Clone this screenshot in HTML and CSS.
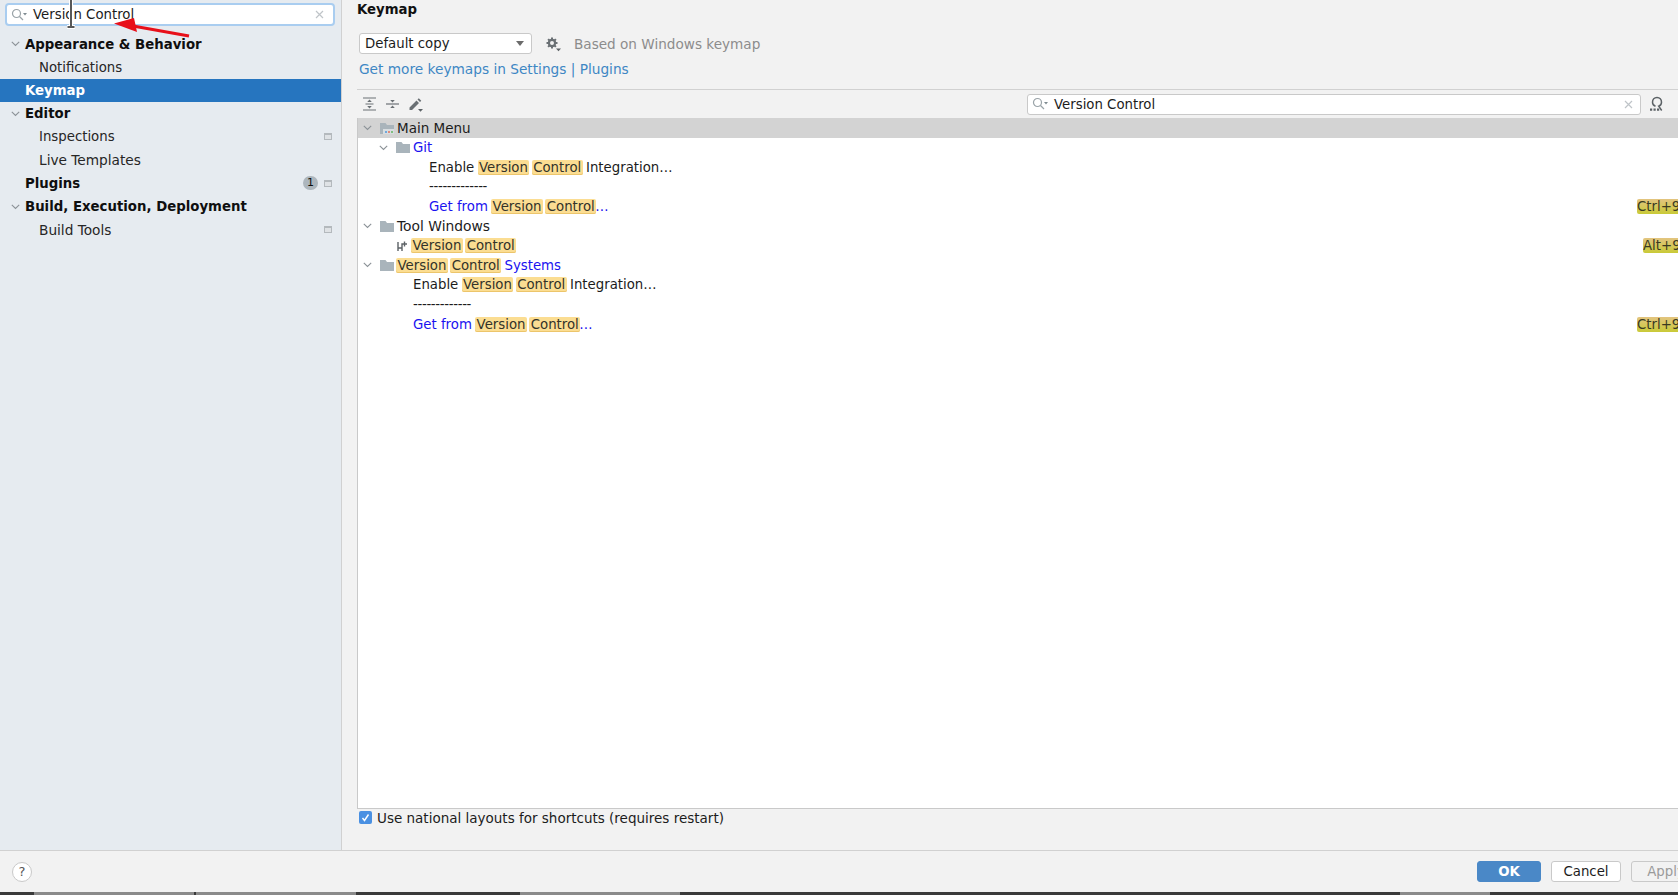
FILE: index.html
```html
<!DOCTYPE html>
<html lang="en">
<head>
<meta charset="utf-8">
<title>Settings - Keymap</title>
<link rel="stylesheet" href="styles.css">
</head>
<body>
<div class="window">
  <div class="main">
    <aside class="sidebar">
      <div class="side-search">
        <svg class="mag" width="16" height="14" viewBox="0 0 16 14"><circle cx="5.5" cy="5.5" r="4" fill="none" stroke="#9aa3a8" stroke-width="1.2"/><path d="M8.5 8.5l3.5 3.5" stroke="#9aa3a8" stroke-width="1.3"/><path d="M12 5h4l-2 2.4z" fill="#7f8b91"/></svg>
        <span class="search-text">Version Control</span>
        <svg class="clear" width="9" height="9" viewBox="0 0 9 9"><path d="M1 1l7 7M8 1l-7 7" stroke="#bfc4c8" stroke-width="1.2"/></svg>
      </div>
      <nav class="side-list">
        <div class="side-row bold"><svg class="chev" width="9" height="6" viewBox="0 0 9 6"><path d="M.8.8l3.7 3.7L8.2.8" fill="none" stroke="#8b9297" stroke-width="1.1"/></svg><span>Appearance &amp; Behavior</span></div>
        <div class="side-row sub"><span>Notifications</span></div>
        <div class="side-row bold top selected"><span>Keymap</span></div>
        <div class="side-row bold"><svg class="chev" width="9" height="6" viewBox="0 0 9 6"><path d="M.8.8l3.7 3.7L8.2.8" fill="none" stroke="#8b9297" stroke-width="1.1"/></svg><span>Editor</span></div>
        <div class="side-row sub"><span>Inspections</span><i class="proj"></i></div>
        <div class="side-row sub wide"><span>Live Templates</span></div>
        <div class="side-row bold top"><span>Plugins</span><b class="badge">1</b><i class="proj"></i></div>
        <div class="side-row bold"><svg class="chev" width="9" height="6" viewBox="0 0 9 6"><path d="M.8.8l3.7 3.7L8.2.8" fill="none" stroke="#8b9297" stroke-width="1.1"/></svg><span>Build, Execution, Deployment</span></div>
        <div class="side-row sub wide"><span>Build Tools</span><i class="proj"></i></div>
      </nav>
    </aside>
    <section class="content">
      <h1 class="title">Keymap</h1>
      <div class="scheme-row">
        <div class="combo"><span>Default copy</span><i class="combo-arrow"></i></div>
        <svg class="gear" width="17" height="16" viewBox="0 0 17 16"><circle cx="7" cy="7" r="3.1" fill="none" stroke="#6a7074" stroke-width="2.2"/><path d="M7 1.500v2M7 10.500v2M1.500 7h2M10.500 7h2M3.100 3.100l1.400 1.400M9.500 9.500l1.400 1.400M10.900 3.100L9.500 4.500M4.500 9.500l-1.400 1.400" stroke="#6a7074" stroke-width="2"/><path d="M11 12.500h5l-2.500 2.700z" fill="#5c6266"/></svg>
        <span class="based">Based on Windows keymap</span>
      </div>
      <div class="more"><a>Get more keymaps in Settings | Plugins</a></div>
      <hr class="sep">
      <div class="toolbar">
        <div class="tools">
          <svg width="15" height="14" viewBox="0 0 15 14"><path d="M1 1h13M1 13h13M3.500 7h8" stroke="#6a7074" stroke-width="1.200"/><path d="M7.500 2.500l2.300 2.600H5.200zM7.500 11.500l2.300-2.600H5.200z" fill="#6a7074"/></svg>
          <svg width="15" height="14" viewBox="0 0 15 14"><path d="M1 7h13" stroke="#6a7074" stroke-width="1.200"/><path d="M7.500 5.500L9.800 2.900H5.200zM7.500 8.500l2.300 2.600H5.200z" fill="#6a7074"/></svg>
          <svg width="15" height="15" viewBox="0 0 15 15"><path d="M1.500 10.500L8.500 3.500l2.500 2.500-7 7H1.500zM9.500 2.500l1.300-1.300 2.500 2.500L12 5z" fill="#6a7074"/><path d="M10 12h5l-2.500 2.700z" fill="#5c6266"/></svg>
        </div>
        <div class="tree-search">
          <svg class="mag" width="16" height="14" viewBox="0 0 16 14"><circle cx="5.500" cy="5.500" r="4" fill="none" stroke="#9aa3a8" stroke-width="1.200"/><path d="M8.500 8.500l3.500 3.500" stroke="#9aa3a8" stroke-width="1.300"/><path d="M12 5h4l-2 2.400z" fill="#7f8b91"/></svg>
          <span class="search-text">Version Control</span>
          <svg class="clear" width="9" height="9" viewBox="0 0 9 9"><path d="M1 1l7 7M8 1l-7 7" stroke="#bfc4c8" stroke-width="1.200"/></svg>
        </div>
        <svg class="shortcut-find" width="16" height="16" viewBox="0 0 16 16"><path d="M6.500 10.200C4.400 9.500 3.500 7.900 3.500 6.200 3.500 3.600 5.300 1.500 8 1.500s4.500 2.100 4.500 4.700c0 1.700-.9 3.300-2.800 4l3 4.300" fill="none" stroke="#5c6266" stroke-width="1.500"/><path d="M1 12.500h2.200v2.200H1zM4.500 12.500h2.200v2.200H4.500zM8 12.500h2.200v2.200H8z" fill="#5c6266"/></svg>
      </div>
      <div class="tree">
        <div class="row selected-row lv0"><svg class="chev" width="9" height="6" viewBox="0 0 9 6"><path d="M.8.8l3.700 3.700L8.200.8" fill="none" stroke="#8b9297" stroke-width="1.100"/></svg><svg class="folder" width="14" height="13" viewBox="0 0 14 13"><path d="M0 1h5.500l1.500 2H14v9H0z" fill="#a9b4bb"/><path d="M3 7h11v5H3z" fill="#d8dde0"/><path d="M5 9h2v2H5z" fill="#6fa8dc"/><path d="M8 9h2v2H8z" fill="#e08a7a"/><path d="M11 9h2v2h-2z" fill="#7fbf7f"/></svg><span class="name">Main Menu</span></div>
        <div class="row lv1"><svg class="chev" width="9" height="6" viewBox="0 0 9 6"><path d="M.8.8l3.700 3.700L8.200.8" fill="none" stroke="#8b9297" stroke-width="1.100"/></svg><svg class="folder" width="14" height="11" viewBox="0 0 14 11"><path d="M0 0h5.500L7 2h7v9H0z" fill="#a9b4bb"/></svg><span class="mod">Git</span></div>
        <div class="row lv2"><span>Enable <mark>Version</mark> <mark>Control</mark> Integration…</span></div>
        <div class="row lv2"><span class="rule">-------------</span></div>
        <div class="row lv2"><span class="mod">Get from <mark>Version</mark> <mark>Control</mark>…</span><span class="keys">Ctrl+9</span></div>
        <div class="row lv0"><svg class="chev" width="9" height="6" viewBox="0 0 9 6"><path d="M.8.8l3.700 3.700L8.200.8" fill="none" stroke="#8b9297" stroke-width="1.100"/></svg><svg class="folder" width="14" height="11" viewBox="0 0 14 11"><path d="M0 0h5.500L7 2h7v9H0z" fill="#a9b4bb"/></svg><span class="name wider">Tool Windows</span></div>
        <div class="row lv-action"><svg class="vcs" width="10" height="10" viewBox="0 0 10 10"><path d="M1 1v9M5 10V3h5M7.500 .500v5M1 7h4" fill="none" stroke="#5c6266" stroke-width="1.400"/></svg><span><mark>Version</mark> <mark>Control</mark></span><span class="keys alt">Alt+9</span></div>
        <div class="row lv0"><svg class="chev" width="9" height="6" viewBox="0 0 9 6"><path d="M.8.8l3.700 3.700L8.200.8" fill="none" stroke="#8b9297" stroke-width="1.100"/></svg><svg class="folder" width="14" height="11" viewBox="0 0 14 11"><path d="M0 0h5.500L7 2h7v9H0z" fill="#a9b4bb"/></svg><span class="mod"><mark>Version</mark> <mark>Control</mark> Systems</span></div>
        <div class="row lv1b"><span>Enable <mark>Version</mark> <mark>Control</mark> Integration…</span></div>
        <div class="row lv1b"><span class="rule">-------------</span></div>
        <div class="row lv1b"><span class="mod">Get from <mark>Version</mark> <mark>Control</mark>…</span><span class="keys">Ctrl+9</span></div>
      </div>
      <label class="national"><i class="check"><svg width="9" height="9" viewBox="0 0 9 9"><path d="M1.500 5l2 2.500L7.500 1.500" fill="none" stroke="#fff" stroke-width="1.400"/></svg></i><span>Use national layouts for shortcuts (requires restart)</span></label>
    </section>
  </div>
  <footer class="footer">
    <div class="help">?</div>
    <div class="buttons">
      <button class="btn ok">OK</button>
      <button class="btn">Cancel</button>
      <button class="btn disabled">Apply</button>
    </div>
  </footer>
  <div class="taskbar">
    <i class="task"></i><i class="task"></i><i class="task off"></i><i class="task"></i><i class="spacer"></i><i class="task end"></i>
  </div>
</div>
<svg class="arrow" width="80" height="24" viewBox="0 0 80 24"><path d="M76 18L20 8" stroke="#e8101a" stroke-width="3.200"/><path d="M1 5.500L21 0l3 14z" fill="#e8101a"/></svg>
<svg class="ibeam" width="10" height="30" viewBox="0 0 10 30"><path d="M5 0v26M1 27h8" stroke="#fff" stroke-width="4"/><path d="M5 0v26M1.500 27h7" stroke="#222" stroke-width="1.500"/></svg>
</body>
</html>
```
FILE: styles.css
```css
* { box-sizing: border-box; }
html, body { margin: 0; height: 100%; overflow: hidden; }
body { font-family: "DejaVu Sans", sans-serif; font-size: 13.3px; color: #1c1c1c; background: #f2f2f2; }
.window { width: 1678px; height: 895px; display: flex; flex-direction: column; overflow: hidden; }
.main { flex: 1; display: flex; min-height: 0; }

.sidebar { width: 342px; background: #e6ebf0; border-right: 1px solid #d1d1d1; padding-top: 3px; flex: none; }
.side-search { margin: 0 6px 0 5px; height: 23px; background: #fff; border: 2px solid #a9cdf0; border-radius: 4px; display: flex; align-items: center; padding: 0 9px 0 4px; }
.side-search .search-text { margin-left: 6px; flex: 1; }
.clear { flex: none; }
.side-list { padding-top: 6.6px; display: flex; flex-direction: column; }
.side-row { height: 23.2px; display: flex; align-items: center; white-space: nowrap; }
.side-row .chev { margin-left: 11px; margin-right: 5px; }
.side-row.bold { font-weight: 700; color: #0f0f0f; }
.side-row.top { padding-left: 25px; }
.side-row.sub { padding-left: 39px; color: #262626; }
.side-row.wide { font-size: 13.7px; }
.side-row span:first-of-type { flex: 1; }
.side-row .chev + span { flex: 1; }
.selected { background: #2675bf; color: #fff !important; }
.proj { width: 8px; height: 7px; background: #dfe2e5; border: 1px solid #b4b9bd; border-top-width: 2px; margin-right: 9px; flex: none; }
.badge { font-weight: 400; font-size: 11px; width: 15px; height: 14px; line-height: 14px; text-align: center; border-radius: 7px; background: #adb6bd; margin-right: 6px; }

.content { flex: 1; min-width: 0; padding: 0 0 0 15px; display: flex; flex-direction: column; }
.title { margin: 0; font-size: 13.3px; font-weight: 700; line-height: 19px; height: 33px; color: #111; }
.scheme-row { display: flex; align-items: center; height: 21px; padding-left: 2px; }
.combo { width: 173px; height: 21px; background: #fff; border: 1px solid #c9c9c9; border-radius: 3px; display: flex; align-items: center; justify-content: space-between; padding: 0 7px 0 5px; }
.combo-arrow { width: 0; height: 0; border-left: 4px solid transparent; border-right: 4px solid transparent; border-top: 5px solid #6b6b6b; }
.gear { margin-left: 13px; }
.based { margin-left: 12px; color: #8c8c8c; font-size: 13.6px; }
.more { margin-top: 6px; padding-left: 2px; line-height: 19px; height: 29px; font-size: 13.7px; }
.more a { color: #3e87c4; }
.sep { margin: 0; border: 0; border-top: 1px solid #d1d1d1; height: 1px; }
.toolbar { height: 28px; display: flex; align-items: center; padding-right: 13px; }
.tools { display: flex; gap: 8px; padding-left: 5px; flex: 1; }
.tree-search { width: 614px; height: 21px; background: #fff; border: 1px solid #c9c9c9; border-radius: 3px; display: flex; align-items: center; padding: 0 7px 0 4px; }
.tree-search .search-text { margin-left: 6px; flex: 1; }
.shortcut-find { margin-left: 8px; }

.tree { flex: 1; min-height: 0; background: #fff; border-bottom: 1px solid #c9c9c9; border-left: 1px solid #c9c9c9; overflow: hidden; }
.row { height: 19.6px; display: flex; align-items: center; white-space: nowrap; }
.row .chev { margin-right: 8px; flex: none; }
.row .folder { margin-right: 3px; flex: none; }
.selected-row { background: #d3d3d3; height: 20px; }
.name { font-size: 13.5px; }
.name.wider { font-size: 13.85px; }
.rule { letter-spacing: -0.33px; }
.lv0 { padding-left: 5px; }
.lv1 { padding-left: 21px; }
.lv2 { padding-left: 71px; }
.lv1b { padding-left: 55px; }
.lv-action { padding-left: 39px; }
.vcs { margin-right: 5px; flex: none; }
.mod { color: #1a12f0; }
mark { background: #fbdd92; color: #33332a; border-radius: 2px; box-shadow: inset 0 -1px 0 #ecc56b; padding: 0 1.5px; margin: 0 -1px; }
.keys { margin-left: auto; width: 41px; overflow: hidden; flex: none; background: linear-gradient(#e3c480, #c9ca37); border-radius: 2px 0 0 2px; color: #3a3a22; }
.keys.alt { width: 35px; }

.national { height: 41px; display: flex; align-items: flex-start; padding: 1px 0 0 2px; font-size: 13.5px; }
.check { width: 13px; height: 13px; margin-top: 1px; background: #4a90e2; border-radius: 2px; display: flex; align-items: center; justify-content: center; margin-right: 5px; }

.footer { height: 42px; border-top: 1px solid #d1d1d1; flex: none; display: flex; align-items: center; justify-content: space-between; padding: 0 0 0 12px; }
.help { width: 20px; height: 20px; border-radius: 50%; background: #fff; border: 1px solid #c9c9c9; display: flex; align-items: center; justify-content: center; color: #555; font-size: 13px; }
.buttons { display: flex; gap: 10px; width: 201px; flex: none; overflow: hidden; }
.btn { font: 13.3px "DejaVu Sans", sans-serif; height: 21px; width: 70px; background: #fff; border: 1px solid #c9c9c9; border-radius: 3px; padding: 0; color: #1c1c1c; flex: none; }
.btn.ok { width: 64px; background: #4a88c7; border-color: #4a88c7; color: #fff; font-weight: 700; }
.btn.disabled { background: #f2f2f2; color: #9a9a9a; }

.taskbar { height: 3px; flex: none; background: #3a3a3a; display: flex; gap: 2px; padding-left: 34px; }
.task { width: 160px; background: #8a8a8a; flex: none; }
.task.off { background: transparent; }
.spacer { flex: 1; }
.task.end { width: 90px; margin-right: 188px; }

.arrow { position: absolute; left: 113px; top: 18px; }
.ibeam { position: absolute; left: 66px; top: 0; }
```
